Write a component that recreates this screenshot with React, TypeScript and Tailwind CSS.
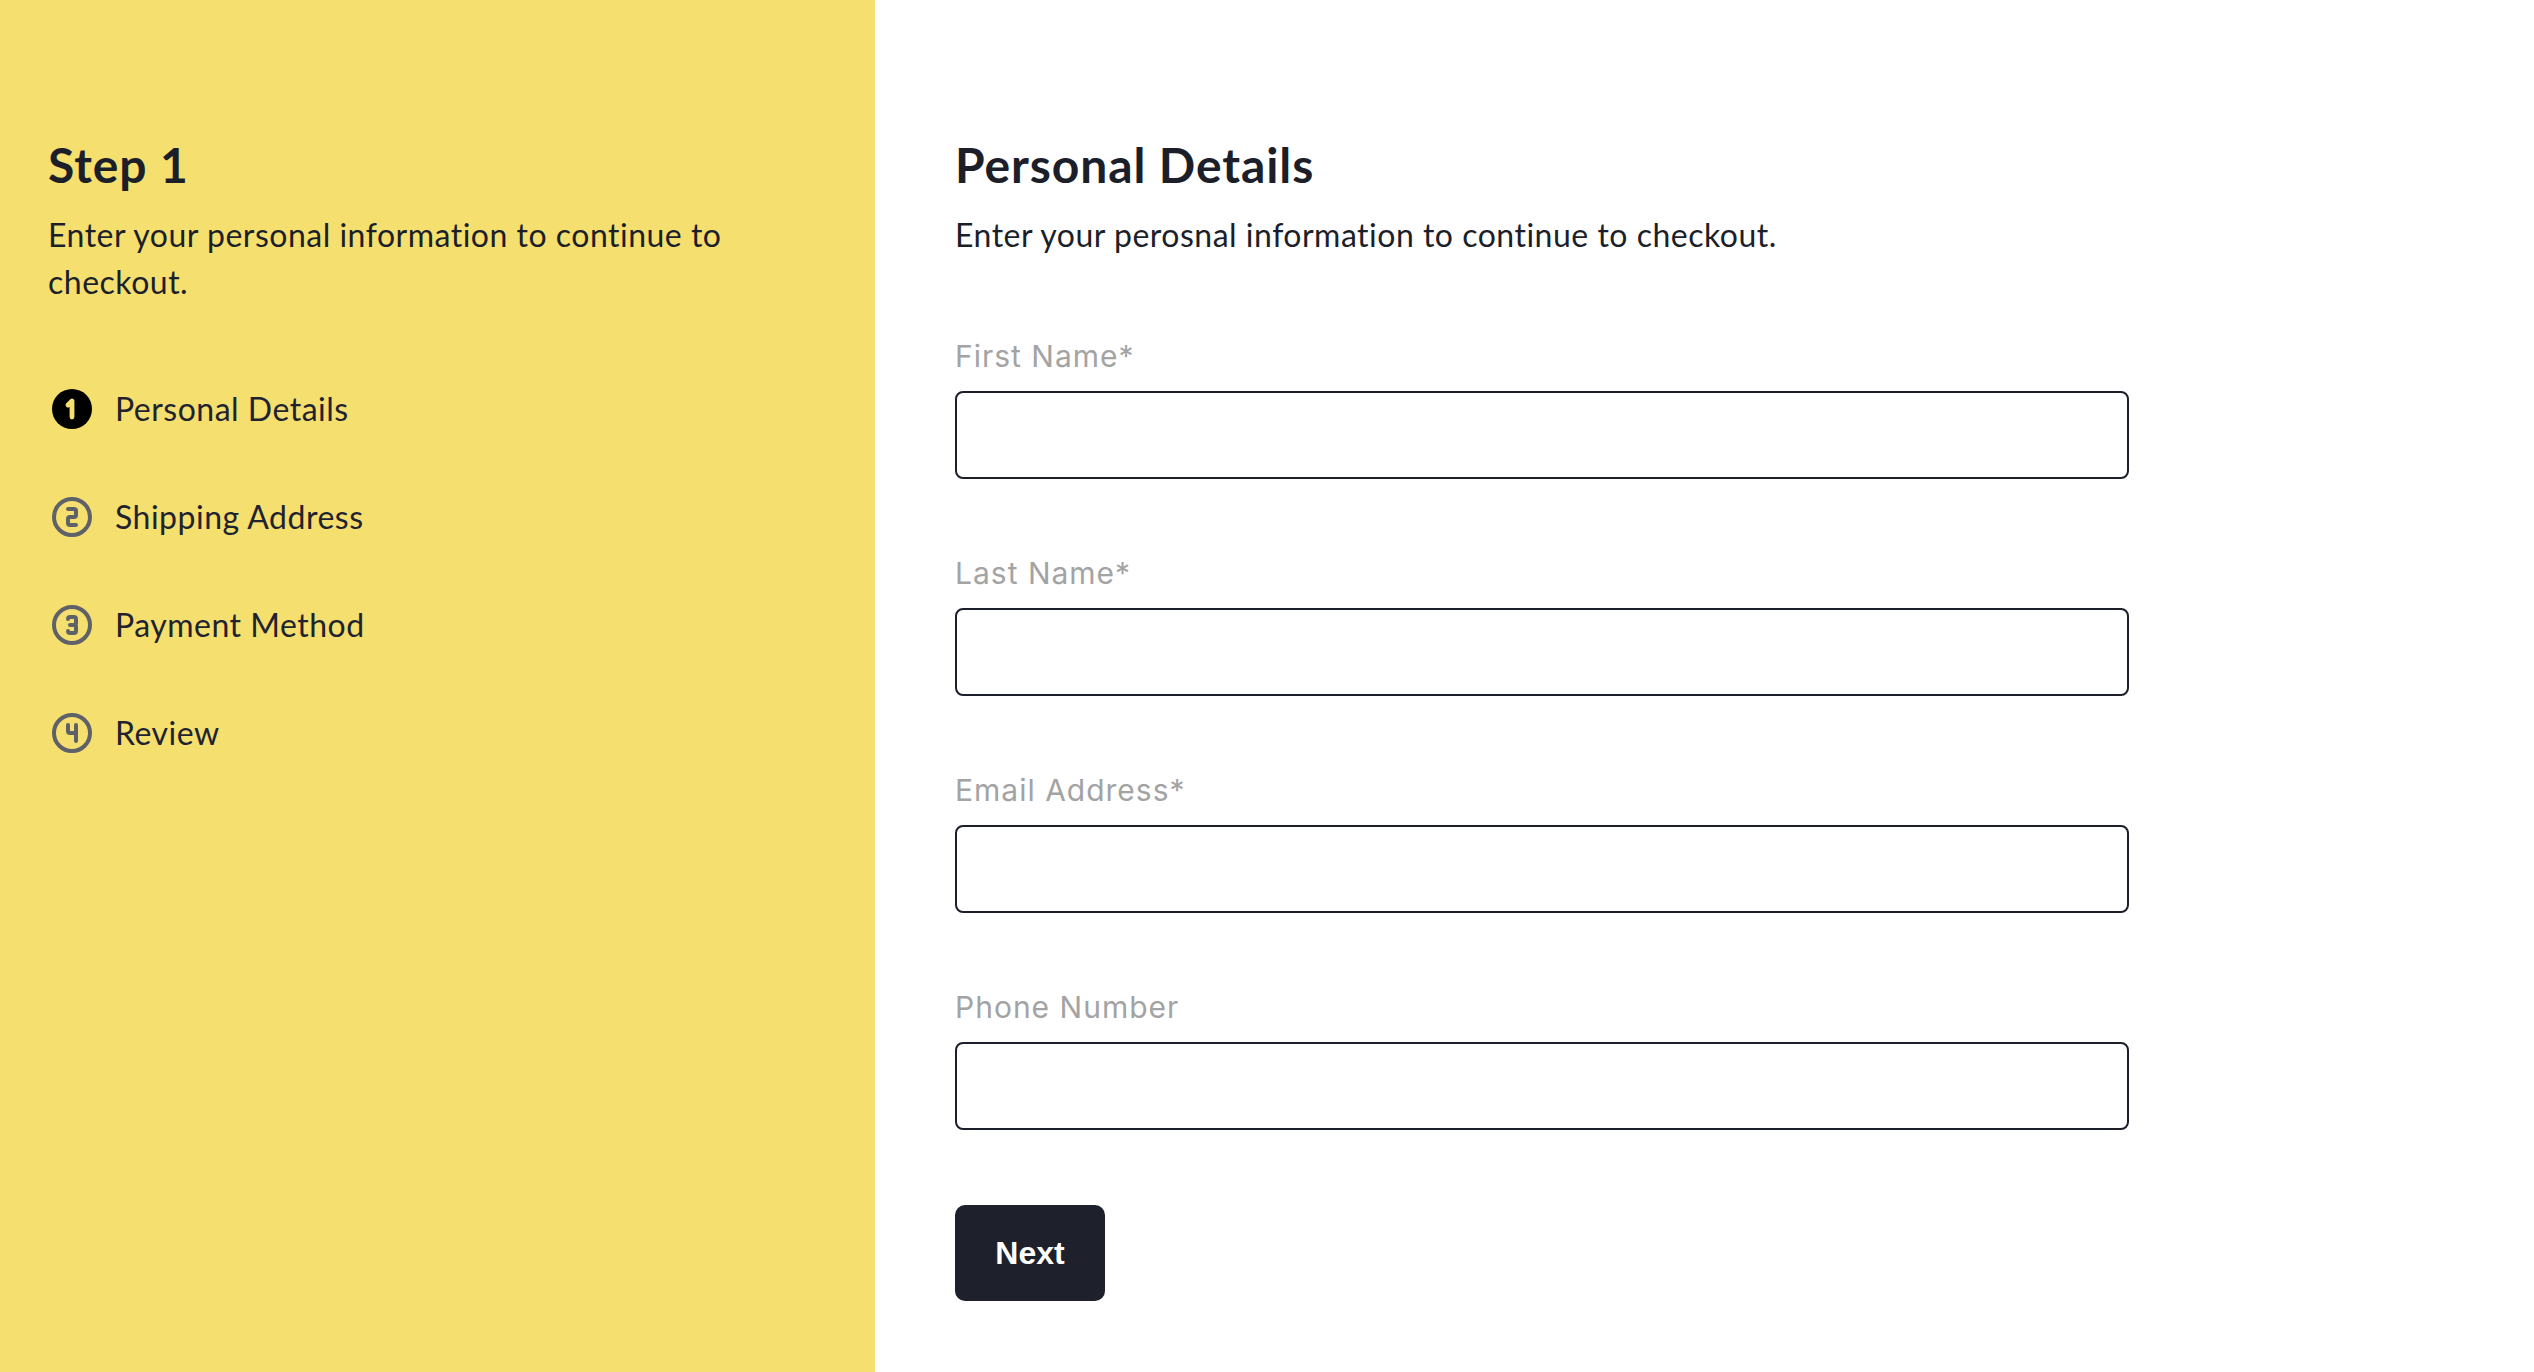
import React from "react";

const DIGITS: Record<number, string[]> = {
  1: ["M10 10l2 -2v8"],
  2: ["M10 8h3a1 1 0 0 1 1 1v2a1 1 0 0 1 -1 1h-2a1 1 0 0 0 -1 1v2a1 1 0 0 0 1 1h3"],
  3: [
    "M10 9a1 1 0 0 1 1 -1h2a1 1 0 0 1 1 1v2a1 1 0 0 1 -1 1h-2h2a1 1 0 0 1 1 1v2a1 1 0 0 1 -1 1h-2a1 1 0 0 1 -1 -1",
  ],
  4: ["M10 8v3a1 1 0 0 0 1 1h3", "M14 8v8"],
};

function StepIcon({ n, active }: { n: number; active: boolean }) {
  if (active) {
    return (
      <svg width="48" height="48" viewBox="0 0 24 24" className="shrink-0">
        <circle cx="12" cy="12" r="10" fill="#000000" />
        {DIGITS[n].map((d, i) => (
          <path key={i} d={d} fill="none" stroke="#f5df6e" strokeWidth="2.4" strokeLinecap="round" strokeLinejoin="round" />
        ))}
      </svg>
    );
  }
  return (
    <svg width="48" height="48" viewBox="0 0 24 24" className="shrink-0">
      <circle cx="12" cy="12" r="9" fill="none" stroke="#5f6168" strokeWidth="2" />
      {DIGITS[n].map((d, i) => (
        <path key={i} d={d} fill="none" stroke="#5f6168" strokeWidth="2" strokeLinecap="round" strokeLinejoin="round" />
      ))}
    </svg>
  );
}

const steps = ["Personal Details", "Shipping Address", "Payment Method", "Review"];
const fields = ["First Name*", "Last Name*", "Email Address*", "Phone Number"];

export default function App() {
  return (
    <div className="flex min-h-[1372px] w-full bg-white">
      <aside className="w-[875px] shrink-0 bg-[#f5df6e] px-[48px] pt-[136px] font-['Lato',sans-serif] text-[#1c1f2a]">
        <h1 className="text-[48px] font-bold leading-[58px] tracking-[0.9px]">Step 1</h1>
        <p className="mt-[17px] text-[32px] leading-[47px] tracking-[0.5px]">
          Enter your personal information to continue to checkout.
        </p>
        <ul className="mt-[80px] flex flex-col gap-[60px]">
          {steps.map((s, i) => (
            <li key={s} className="flex items-center gap-[19px]">
              <StepIcon n={i + 1} active={i === 0} />
              <span className="text-[32px] leading-[48px] tracking-[0.5px] text-[#1f2330]">{s}</span>
            </li>
          ))}
        </ul>
      </aside>
      <main className="flex-1 pl-[80px] pt-[136px] text-[#1c1f2a]">
        <h2 className="font-['Lato',sans-serif] text-[48px] font-bold leading-[58px] tracking-[0.9px]">Personal Details</h2>
        <p className="mt-[17px] font-['Lato',sans-serif] text-[32px] leading-[47px] tracking-[0.5px]">
          Enter your perosnal information to continue to checkout.
        </p>
        <form className="mt-[80px] flex w-[1174px] flex-col gap-[76px]" onSubmit={(e) => e.preventDefault()}>
          {fields.map((f) => (
            <label key={f} className="flex flex-col gap-[17px]">
              <span className="font-['Inter',sans-serif] text-[30px] leading-[36px] tracking-[1px] text-[#a3a3a3]">{f}</span>
              <input
                type="text"
                className="h-[88px] w-full rounded-[8px] border-2 border-[#1c1f2a] bg-white px-4 text-[28px] outline-none"
              />
            </label>
          ))}
          <div className="-mt-[1px]">
            <button
              type="submit"
              className="h-[96px] w-[150px] rounded-[10px] bg-[#1e212b] font-['Liberation_Sans',Arial,sans-serif] text-[32px] font-bold text-white"
            >
              Next
            </button>
          </div>
        </form>
      </main>
    </div>
  );
}
